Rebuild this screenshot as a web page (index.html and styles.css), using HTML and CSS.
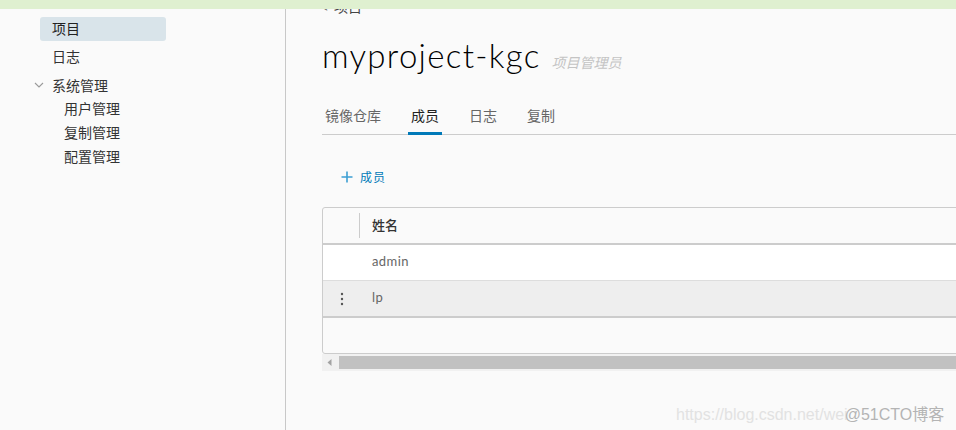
FILE: index.html
```html
<!DOCTYPE html>
<html lang="zh-CN">
<head>
<meta charset="utf-8">
<title>myproject-kgc</title>
<link rel="stylesheet" href="styles.css">
</head>
<body>
<div class="topbar"></div>
<div class="layout">
  <aside class="sidebar">
    <div class="nav-item active">项目</div>
    <div class="nav-item">日志</div>
    <div class="group-head">
      <svg class="chev" width="10" height="6" viewBox="0 0 10 6"><path d="M1 1 L5 5 L9 1" fill="none" stroke="#9a9a9a" stroke-width="1.1"/></svg>
      <span>系统管理</span>
    </div>
    <div class="sub-item">用户管理</div>
    <div class="sub-item">复制管理</div>
    <div class="sub-item">配置管理</div>
  </aside>
  <main class="main">
    <div class="crumb"><span class="lt">&lt;</span> 项目</div>
    <div class="title-row">
      <h1 class="title">myproject-kgc</h1>
      <span class="role">项目管理员</span>
    </div>
    <nav class="tabs">
      <span class="tab">镜像仓库</span>
      <span class="tab active">成员</span>
      <span class="tab">日志</span>
      <span class="tab">复制</span>
    </nav>
    <div class="actions">
      <button class="add-btn">
        <svg width="12" height="12" viewBox="0 0 12 12"><path d="M6 0.5 V11.5 M0.5 6 H11.5" stroke="#3c9fd3" stroke-width="1.6"/></svg>
        <span>成员</span>
      </button>
    </div>
    <div class="grid">
      <div class="row head">
        <div class="cell-act"><span class="sep"></span></div>
        <div class="cell">姓名</div>
      </div>
      <div class="row r1">
        <div class="cell-act"></div>
        <div class="cell">admin</div>
      </div>
      <div class="row r2">
        <div class="cell-act">
          <svg width="4" height="14" viewBox="0 0 4 14"><circle cx="2" cy="2" r="1.2" fill="#555"/><circle cx="2" cy="7" r="1.2" fill="#555"/><circle cx="2" cy="12" r="1.2" fill="#555"/></svg>
        </div>
        <div class="cell">lp</div>
      </div>
      <div class="row empty"></div>
    </div>
    <div class="hscroll">
      <svg class="arrow" width="5" height="7" viewBox="0 0 5 7"><path d="M4.5 0 L0.5 3.5 L4.5 7 Z" fill="#a3a3a3"/></svg>
      <div class="thumb"></div>
    </div>
  </main>
</div>
<div class="watermark"><span class="wm1">https://blog.csdn.net/wei</span><span class="wm2">@51CTO博客</span></div>
</body>
</html>
```
FILE: styles.css
```css
html, body {
  margin: 0;
  padding: 0;
}
body {
  width: 956px;
  height: 430px;
  overflow: hidden;
  background: #fafafa;
  font-family: "Lato", "Noto Sans CJK SC", sans-serif;
  color: #333;
}
.topbar {
  position: fixed;
  top: 0;
  left: 0;
  right: 0;
  height: 9px;
  background: #dff0d0;
  z-index: 5;
}
.layout {
  display: flex;
  height: 430px;
}
.sidebar {
  width: 285px;
  flex: 0 0 285px;
  border-right: 1px solid #c8c8c8;
  padding-top: 17px;
  box-sizing: content-box;
  font-size: 14px;
}
.nav-item {
  margin-left: 40px;
  width: 114px;
  height: 24px;
  line-height: 24px;
  padding-left: 12px;
  margin-bottom: 4px;
  border-radius: 3px;
  color: #333;
}
.nav-item.active {
  background: #d9e4ea;
  color: #222;
}
.group-head {
  display: flex;
  align-items: center;
  margin-left: 34px;
  margin-top: 4px;
  height: 24px;
  color: #333;
}
.group-head span {
  margin-left: 8px;
}
.sub-item {
  margin-left: 64px;
  height: 24px;
  line-height: 24px;
  color: #333;
}
.main {
  flex: 1;
  padding-left: 36px;
  min-width: 0;
}
.crumb {
  margin-top: -3px;
  height: 20px;
  line-height: 20px;
  font-size: 14px;
  color: #444;
}
.crumb .lt {
  font-size: 11px;
  color: #666;
  margin-right: 2px;
}
.title-row {
  display: flex;
  align-items: baseline;
  margin-top: 18px;
  height: 40px;
}
.title {
  margin: 0;
  font-weight: 300;
  font-size: 33px;
  line-height: 40px;
  color: #000;
  letter-spacing: 1.3px;
}
.role {
  margin-left: 11px;
  font-size: 14px;
  font-style: italic;
  color: #c4c4c4;
}
.tabs {
  display: flex;
  margin-top: 24px;
  width: 700px;
  border-bottom: 1px solid #ccc;
}
.tab {
  position: relative;
  height: 35px;
  line-height: 33px;
  padding: 0 3px;
  margin-right: 24px;
  font-size: 14px;
  color: #666;
}
.tab.active {
  color: #222;
}
.tab.active::after {
  content: "";
  position: absolute;
  left: 0;
  right: 0;
  bottom: -1px;
  height: 3px;
  background: #0079b8;
}
.actions {
  margin-top: 24px;
  height: 36px;
  display: flex;
  align-items: center;
}
.add-btn {
  display: flex;
  align-items: center;
  border: 0;
  background: none;
  padding: 0;
  margin-left: 19px;
  font-family: "Lato", "Noto Sans CJK SC", sans-serif;
  font-size: 12px;
  letter-spacing: 1px;
  color: #0079b8;
}
.add-btn span {
  margin-left: 7px;
  margin-top: -1px;
}
.grid {
  margin-top: 12px;
  width: 700px;
  border: 1px solid #ccc;
  border-radius: 3px;
  background: #fafafa;
}
.row {
  display: flex;
  height: 35px;
  align-items: center;
  font-size: 13px;
}
.cell-act {
  width: 37px;
  height: 100%;
  position: relative;
  display: flex;
  align-items: center;
  justify-content: center;
}
.cell {
  padding-left: 12px;
  padding-bottom: 3px;
  color: #666;
  letter-spacing: 0.4px;
}
.row.head {
  border-bottom: 2px solid #ccc;
}
.row.head .cell {
  color: #333;
  font-weight: 500;
  letter-spacing: 0;
}
.sep {
  position: absolute;
  right: 0;
  top: 5px;
  bottom: 5px;
  border-right: 1px solid #ccc;
}
.row.r1 {
  background: #fff;
  border-bottom: 1px solid #ddd;
}
.row.r2 {
  background: #eee;
  border-bottom: 2px solid #ccc;
}
.row.empty {
  height: 35px;
}
.hscroll {
  display: flex;
  align-items: center;
  width: 700px;
  height: 17px;
  background: #f1f1f1;
}
.hscroll .arrow {
  margin-left: 5px;
  flex: 0 0 auto;
}
.thumb {
  margin-left: 7px;
  flex: 1;
  height: 13px;
  background: #c1c1c1;
}
.watermark {
  position: absolute;
  left: 676px;
  top: 401px;
  font-family: "Liberation Sans", Arial, "Noto Sans CJK SC", sans-serif;
  font-size: 16px;
  white-space: nowrap;
}
.wm1 {
  color: #e2e2e2;
}
.wm2 {
  color: #b4b4b4;
  margin-left: -3px;
}
```
